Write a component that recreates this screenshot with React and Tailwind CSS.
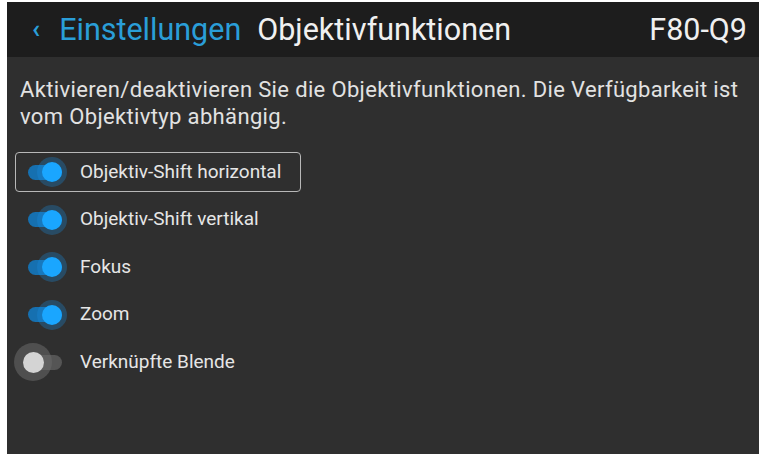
const options = [
  { label: 'Objektiv-Shift horizontal', on: true, focused: true },
  { label: 'Objektiv-Shift vertikal', on: true },
  { label: 'Fokus', on: true },
  { label: 'Zoom', on: true },
  { label: 'Verknüpfte Blende', on: false },
];

// Switch: track plus a thumb with a soft halo around it
const Toggle = ({ on }) => (
  <div className="relative w-[36px] h-[32px] flex items-center">
    <div className={`w-[34px] h-[15px] rounded-full ${on ? 'bg-[#1670b0]' : 'bg-[#555555]'}`} />
    {on ? (
      <div className="absolute left-[9px] top-[1px] w-[30px] h-[30px] rounded-full bg-[#1a8fe0]/30 flex items-center justify-center">
        <div className="w-[20px] h-[20px] rounded-full bg-[#1aa6ff]" />
      </div>
    ) : (
      <div className="absolute left-[-14px] top-[-3px] w-[38px] h-[38px] rounded-full bg-[#6a6a6a]/55 flex items-center justify-center">
        <div className="w-[21px] h-[21px] rounded-full bg-[#d4d4d4]" />
      </div>
    )}
  </div>
);

export default function App() {
  return (
    <div className="w-[759px] h-[454px] bg-white pl-[7px] pt-[2px] font-['Roboto',sans-serif]">
      <div className="w-full h-full bg-[#2f2f2f] flex flex-col">
        {/* Header bar */}
        <div className="h-[55px] shrink-0 bg-[#1d1d1d] flex items-center pl-[25px] pr-[12px] text-[30.5px]">
          <span className="text-[#2a9ed8] text-[26px] mr-[19px] font-bold">‹</span>
          <span className="text-[#2a9ed8]">Einstellungen</span>
          <span className="text-[#f0f0f0] ml-[16px]">Objektivfunktionen</span>
          <span className="text-[#f0f0f0] ml-auto">F80-Q9</span>
        </div>

        <p className="px-[13px] pt-[19px] text-[22px] leading-[27px] tracking-[0.35px] text-[#e2e2e2]">
          Aktivieren/deaktivieren Sie die Objektivfunktionen. Die Verfügbarkeit ist vom Objektivtyp abhängig.
        </p>

        <div className="flex flex-col gap-[7.5px] mt-[22px] pl-[8px]">
          {options.map((opt) => (
            <div
              key={opt.label}
              className={`self-start h-[40px] flex items-center pl-[12px] pr-[19px] rounded-[4px] border ${opt.focused ? 'border-[#b8b8b8]' : 'border-transparent'}`}
            >
              <Toggle on={opt.on} />
              <span className="ml-[16px] text-[19px] text-[#e6e6e6]">{opt.label}</span>
            </div>
          ))}
        </div>
      </div>
    </div>
  );
}
